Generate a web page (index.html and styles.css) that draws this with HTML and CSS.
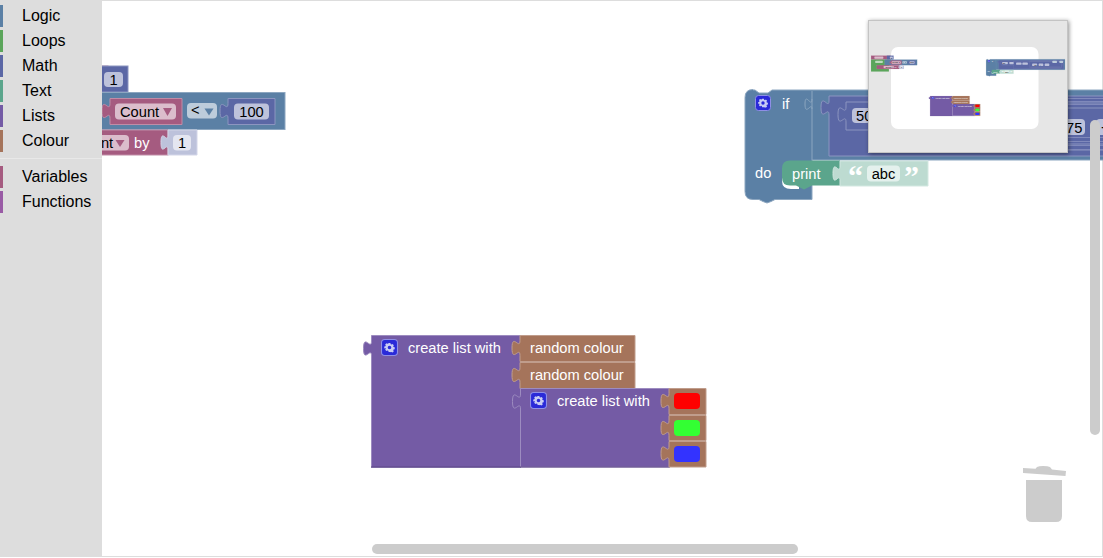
FILE: index.html
```html
<!DOCTYPE html>
<html lang="en">
<head>
    <meta charset="UTF-8">
    <title>Blocks</title>
    <link rel="stylesheet" href="styles.css">
</head>
<body>
    <div class="page">
        <div class="toolbox">
            <div class="cat"><span class="stripe logic"></span>Logic</div>
            <div class="cat"><span class="stripe loops"></span>Loops</div>
            <div class="cat"><span class="stripe math"></span>Math</div>
            <div class="cat"><span class="stripe text"></span>Text</div>
            <div class="cat"><span class="stripe lists"></span>Lists</div>
            <div class="cat"><span class="stripe colour"></span>Colour</div>
            <div class="sep"></div>
            <div class="cat"><span class="stripe vars"></span>Variables</div>
            <div class="cat"><span class="stripe funcs"></span>Functions</div>
        </div>

        <svg class="workspace" width="1103" height="558" viewBox="0 0 1103 558">
            <defs>
                <symbol id="gear" viewBox="0 0 16 16">
                    <rect x="0.5" y="0.5" width="15" height="15" rx="3" class="gear-bg"/>
                    <path class="gear" transform="translate(1.2 1.2) scale(0.85)" d="M7 3h2l.3 1.3 1 .4 1.100-.7 1.400 1.400-.7 1.100.4 1 1.300.3v2l-1.300.3-.4 1 .7 1.100-1.400 1.400-1.100-.7-1 .4L9 13H7l-.3-1.300-1-.4-1.100.7-1.400-1.400.7-1.100-.4-1L2.200 9V7l1.300-.3.4-1-.7-1.100 1.400-1.400 1.100.7 1-.4zM8 6a2 2 0 1 0 0 4 2 2 0 0 0 0-4z"/>
                </symbol>
                <g id="blocks">
                    <!-- left stack, mostly behind the toolbox -->
                    <rect class="b-vars" x="-22" y="66" width="130" height="26"/>
                    <rect class="b-loops" x="-22" y="92" width="119" height="80"/>
                    <rect class="f-vars" x="0" y="71" width="60" height="15" rx="4"/>
                    <rect class="f-loops" x="6" y="100" width="50" height="15" rx="4"/>
                    <rect class="b-math" x="84" y="66" width="44" height="26"/>
                    <rect class="f-math" x="104" y="72" width="19" height="15" rx="4"/>
                    <text class="t-dark" x="113.500" y="85" text-anchor="middle">1</text>

                    <rect class="b-logic" x="68" y="92.500" width="217" height="37"/>
                    <path class="b-vars" d="M110 98.500h72v26h-72v-6c0,-10 -8,8 -8,-7.500s8,2.500 8,-7.500z"/>
                    <rect class="f-vars" x="115" y="103.500" width="61" height="16" rx="4"/>
                    <text class="t-dark" x="120" y="117">Count</text>
                    <path class="arrow-vars" d="M163 108h9l-4.500 8z"/>
                    <rect class="f-logic" x="187" y="103" width="30" height="15.500" rx="4"/>
                    <text class="t-dark" x="191" y="114.500">&lt;</text>
                    <path class="arrow-logic" d="M204.500 108.500h9l-4.500 7z"/>
                    <path class="b-math" d="M228 98.500h47v26h-47v-6c0,-10 -8,8 -8,-7.500s8,2.500 8,-7.500z"/>
                    <rect class="f-math" x="234" y="103.500" width="35" height="16" rx="4"/>
                    <text class="t-dark" x="251.500" y="117" text-anchor="middle">100</text>

                    <rect class="b-vars" x="16" y="130" width="152" height="25"/>
                    <rect class="f-vars" x="62" y="135" width="67" height="15.500" rx="4"/>
                    <text class="t-dark" x="74" y="148">Count</text>
                    <path class="arrow-vars" d="M115.500 140h9l-4.500 7z"/>
                    <text class="t-white" x="134" y="148">by</text>
                    <path class="b-shadow" d="M168 130h29v25h-29v-5c0,-10 -7,8 -7,-7.500s7,2.500 7,-7.500z"/>
                    <rect class="f-shadow" x="173" y="135" width="18" height="15.500" rx="4"/>
                    <text class="t-dark" x="182" y="148" text-anchor="middle">1</text>

                    <!-- if / do block -->
                    <path class="b-logic" d="M753 90h2l4 3h9l4-3h40h459v70h-459v39.500h-37l-4 2-4 1.500-4-1.500-4-2h-6q-8 0-8-8v-94q0-8 8-8z"/>
                    <path class="socket" d="M812 99c0,10 -7,-8 -7,5s7,-3 7,5"/>
                    <line class="edge-logic" x1="812" y1="91" x2="812" y2="160"/>
                    <use href="#gear" x="755" y="95" width="16" height="16"/>
                    <text class="t-white" x="782" y="109">if</text>
                    <text class="t-white" x="755" y="178">do</text>

                    <path class="b-math" d="M829 96h433v60h-433v-41c0,-10 -8,8 -8,-7.500s8,2.500 8,-6.500z"/>
                    <path class="b-math" d="M846 102h410v28h-410v-8c0,-10 -8,8 -8,-7.500s8,2.500 8,-7.500z"/>
                    <rect class="f-math" x="852" y="108" width="38" height="15" rx="4"/>
                    <text class="t-dark" x="856" y="121">50</text>
                    <rect class="f-math" x="900" y="108" width="30" height="15" rx="4"/>
                    <rect class="b-math" x="930" y="104" width="320" height="46"/>
                    <rect class="f-math" x="945" y="112" width="36" height="15" rx="4"/>
                    <rect class="f-math" x="987" y="112" width="36" height="15" rx="4"/>
                    <rect class="b-math" x="1035" y="108" width="210" height="36"/>
                    <rect class="f-math" x="1052" y="119" width="33" height="16" rx="4"/>
                    <text class="t-dark" x="1066" y="133">75</text>
                    <rect class="f-math" x="1096" y="119" width="30" height="16" rx="4"/>
                    <text class="t-dark" x="1101" y="132">+</text>
                    <rect class="f-math" x="1136" y="119" width="30" height="16" rx="4"/>
                    <path class="b-lines" d="M1040 98.500h220M1040 101.500h220M1040 104.500h220M1040 137.500h200M1040 141.500h200M1040 145.500h210M1040 149.500h220"/>
                    <rect class="f-logic" x="1187" y="100" width="30" height="15" rx="4"/>
                    <rect class="f-logic" x="1234" y="100" width="24" height="15" rx="4"/>

                    <path class="notch" d="M782 176v5q0 8 9 8h8v-4h-8q-6 0-6-5v-4z"/>
                    <path class="b-text" d="M790 160.500h50v25h-28l-4 2-4 2-4-2-4-2h-6q-8 0-8-8v-9q0-8 8-8z"/>
                    <text class="t-white" x="792" y="179">print</text>
                    <path class="b-string" d="M840 161h88v25h-88v-5c0,-10 -7,8 -7,-7.500s7,2.500 7,-7.500z"/>
                    <text class="t-quote" x="848" y="186">“</text>
                    <rect class="f-string" x="867" y="165.500" width="33" height="16" rx="4"/>
                    <text class="t-dark" x="883.500" y="179" text-anchor="middle">abc</text>
                    <text class="t-quote" x="904" y="186">”</text>

                    <!-- create list with -->
                    <path class="b-list" d="M371.500 335.500h149v132h-149v-111.500c0,-10 -8,8 -8,-7.500s8,2.500 8,-7.500z"/>
                    <line class="edge-list" x1="371" y1="467" x2="521" y2="467"/>
                    <use href="#gear" x="381" y="339" width="17" height="17"/>
                    <text class="t-white" x="408" y="353">create list with</text>
                    <path class="b-colour" d="M520 335.500h115v26h-115v-6c0,-10 -8,8 -8,-7.500s8,2.500 8,-7.500z"/>
                    <text class="t-white" x="530" y="353">random colour</text>
                    <path class="b-colour" d="M520 362.500h115v26h-115v-6c0,-10 -8,8 -8,-7.500s8,2.500 8,-7.500z"/>
                    <text class="t-white" x="530" y="380">random colour</text>

                    <path class="b-list" d="M520.500 388.500h149v78.500h-149v-58c0,-10 -8,8 -8,-7.500s8,2.500 8,-7.500z"/>
                    <line class="edge-list" x1="520" y1="467" x2="670" y2="467"/>
                    <use href="#gear" x="530" y="392" width="17" height="17"/>
                    <text class="t-white" x="557" y="406">create list with</text>
                    <path class="b-colour" d="M669 388.500h37v26h-37v-6c0,-10 -8,8 -8,-7.500s8,2.500 8,-7.500z"/>
                    <rect class="c-red" x="674" y="393" width="26" height="16" rx="4"/>
                    <path class="b-colour" d="M669 415.500h37v25h-37v-5c0,-10 -8,8 -8,-7.500s8,2.500 8,-7.500z"/>
                    <rect class="c-green" x="674" y="420" width="26" height="16" rx="4"/>
                    <path class="b-colour" d="M669 441.500h37v25.500h-37v-6c0,-10 -8,8 -8,-7.500s8,2.500 8,-7.500z"/>
                    <rect class="c-blue" x="674" y="446" width="26" height="16" rx="4"/>
                </g>
                <clipPath id="view"><rect x="102" y="0" width="1001" height="558"/></clipPath>
            </defs>

            <g clip-path="url(#view)"><use href="#blocks"/></g>

            <!-- trash can -->
            <path class="trash" d="M1023 468l12.500 0.800 1.500-1.800q2-1 6-1 5 0 7 1l2 2.500 14 1.500-0.500 5-42.500-3z"/>
            <path class="trash" d="M1026 480h36v36q0 6-6 6h-24q-6 0-6-6z"/>

            <!-- scrollbars -->
            <rect class="scroll" x="1090" y="120" width="10" height="315" rx="5"/>
            <rect class="scroll" x="372" y="544" width="426" height="10" rx="5"/>

            <!-- minimap -->
            <g class="minimap">
                <rect class="mini-back" x="868.500" y="20.500" width="199" height="132"/>
                <rect class="mini-view" x="891" y="47" width="147.500" height="82" rx="7"/>
                <use href="#blocks" transform="translate(874.350 45.750) scale(0.15)"/>
            </g>
        </svg>
    </div>
</body>
</html>
```

FILE: styles.css
```css
html, body {
    margin: 0;
    height: 100%;
}
body {
    font-family: "Liberation Sans", Arial, sans-serif;
    background: #fff;
    overflow: hidden;
}
.page {
    position: relative;
    width: 1103px;
    height: 557px;
    box-sizing: border-box;
    border-top: 1px solid #ddd;
    border-right: 1px solid #ddd;
    border-bottom: 1px solid #ddd;
}
.toolbox {
    position: absolute;
    left: 0;
    top: -1px;
    bottom: -1px;
    z-index: 2;
    width: 102px;
    padding-top: 3px;
    box-sizing: border-box;
    background: #ddd;
    color: #000;
    font-size: 16px;
}
.cat {
    display: flex;
    align-items: center;
    height: 25px;
    white-space: nowrap;
}
.stripe {
    width: 3px;
    height: 22px;
    margin-right: 19px;
}
.sep {
    height: 1px;
    margin: 5px 0 5px;
    background: #e8e8e8;
}
.logic { background: #5b80a5; }
.loops { background: #5ba55b; }
.math { background: #5b67a5; }
.text { background: #5ba58c; }
.lists { background: #745ba5; }
.colour { background: #a5745b; }
.vars { background: #a55b80; }
.funcs { background: #995ba5; }

.workspace {
    position: absolute;
    left: 0;
    top: -1px;
    display: block;
    z-index: 1;
}
text {
    font-family: "Liberation Sans", Arial, sans-serif;
    font-size: 14.67px;
}
.t-white { fill: #fff; }
.t-dark { fill: #000; }
.t-quote { fill: #fff; font-size: 30px; font-family: "Liberation Serif", serif; font-weight: bold; }

.b-logic { fill: #5b80a5; stroke: #8ca6c0; stroke-width: 1; }
.edge-logic { stroke: #8ca6c0; }
.socket { fill: #5b80a5; stroke: #8ca6c0; }
.b-math { fill: #5b67a5; stroke: #8c95c0; stroke-width: 1; }
.b-lines { fill: none; stroke: #8089bb; }
.b-vars { fill: #a55b80; stroke: #c08ca6; stroke-width: 1; }
.b-loops { fill: #5ba55b; }
.b-shadow { fill: #bdc2db; stroke: #d3d6e8; stroke-width: 1; }
.b-string { fill: #bddbd1; stroke: #d3e8e1; stroke-width: 1; }
.b-text { fill: #5ba58c; }
.notch { fill: #fff; }
.b-list { fill: #745ba5; stroke: #9d8cc0; stroke-width: 1; }
.edge-list { stroke: #5d4984; }
.b-colour { fill: #a5745b; stroke: #c09d8c; stroke-width: 1; }

.f-math { fill: #bdc2db; }
.f-vars { fill: #dbbdcc; }
.f-logic { fill: #bdccdb; }
.f-loops { fill: #bddbbd; }
.f-shadow { fill: #e4e6f1; }
.f-string { fill: #e4f1ed; }
.arrow-vars { fill: #a55b80; }
.arrow-logic { fill: #5b80a5; }
.c-red { fill: #f00; }
.c-green { fill: #3f3; }
.c-blue { fill: #33f; }

.gear-bg { fill: #2a2ad8; stroke: #8f8fe6; stroke-width: 1; }
.gear { fill: #c8ccf4; fill-rule: evenodd; }
.trash { fill: #ccc; }
.scroll { fill: #ccc; }

.mini-back { fill: #e6e6e6; stroke: #c4c4c4; filter: drop-shadow(1px 1px 2px rgba(0, 0, 0, 0.45)); }
.mini-view { fill: #fff; }
```
